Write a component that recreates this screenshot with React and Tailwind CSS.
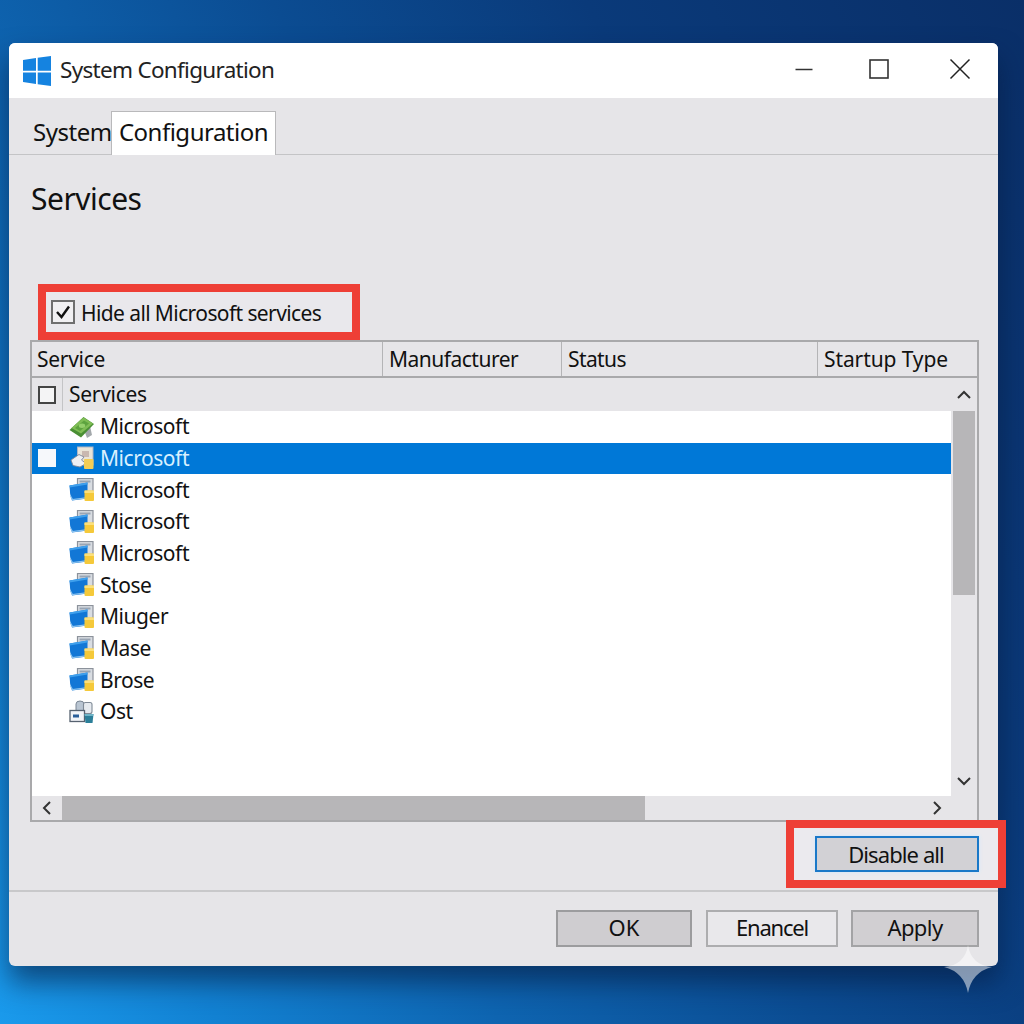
const F = { fontFamily: '"Noto Sans", "Open Sans", sans-serif' };

function WinLogo() {
  return (
    <svg width="28" height="30" viewBox="0 0 28 30" className="shrink-0">
      <path d="M0 4 L13 2 V14.7 H0 Z M14.7 1.8 L28 0 V14.7 H14.7 Z M0 16.4 H13 V28 L0 26 Z M14.7 16.4 H28 V30 L14.7 28.2 Z" fill="#1583e0" />
    </svg>
  );
}

function ServiceIcon() {
  return (
    <svg width="26" height="24" viewBox="0 0 26 24" className="shrink-0">
      <rect x="8.5" y="0.5" width="15.5" height="17" fill="#d9dde2" stroke="#8c929b" strokeWidth="1.2" />
      <rect x="10.5" y="2.5" width="11" height="2" fill="#9aa5b3" />
      <path d="M0.5 7.5 L18.5 4.5 V20.5 L3 22.5 Q0.5 16 0.5 7.5 Z" fill="#1277d6" />
      <path d="M0.5 7.5 L18.5 4.5 V6.5 L0.7 9.5 Z" fill="#3fa0ec" />
      <path d="M1.5 18 L3.5 21.5 L17 19.8" fill="none" stroke="#8cc4f0" strokeWidth="1.2" />
      <rect x="15.5" y="12.5" width="9.5" height="10.5" rx="1" fill="#f5c93a" />
      <rect x="15.5" y="12.5" width="9.5" height="2.5" fill="#fbe07c" />
    </svg>
  );
}

function SelectedIcon() {
  return (
    <svg width="26" height="24" viewBox="0 0 26 24" className="shrink-0">
      <rect x="8.5" y="1" width="15.5" height="18" fill="#e9e4d8" stroke="#aeb6c4" strokeWidth="1" />
      <rect x="13" y="5" width="7" height="6" fill="#c9b8b0" />
      <path d="M2 14 L10 8.5 L15 11 L12.5 14 L17 17.5 L11 21 L4 19.5 Z" fill="#eef0f3" stroke="#7d8696" strokeWidth="0.9" />
      <rect x="15" y="13" width="9.5" height="10" rx="1" fill="#f3cd55" />
    </svg>
  );
}

function MoneyIcon() {
  return (
    <svg width="26" height="24" viewBox="0 0 26 24" className="shrink-0">
      <path d="M15 15 L18 23 L23 20 L21 11 Z" fill="#a3a8ab" />
      <path d="M0.5 15 L14.5 2 L25 9 L12 22.5 Z" fill="#4a8f34" />
      <path d="M2.5 13 L14.5 2.5 L24 8.5 L12 18.5 Z" fill="#7fbd55" />
      <path d="M6 13 L15 5.5 L20 8.5 L11 16 Z" fill="#5da33f" />
      <ellipse cx="13" cy="10.8" rx="3.2" ry="2.2" fill="#94cf6c" />
    </svg>
  );
}

function OstIcon() {
  return (
    <svg width="26" height="24" viewBox="0 0 26 24" className="shrink-0">
      <path d="M7 11 V4 Q7 1 11 1 Q15 1 15 4 V11 Z" fill="#b9c5d2" stroke="#7a8694" strokeWidth="1" />
      <rect x="14.5" y="2.5" width="8.5" height="11" rx="2" fill="#e6eaef" stroke="#7f8a96" strokeWidth="1.1" />
      <rect x="1" y="10.5" width="14.5" height="11" fill="#f3f5f8" stroke="#566270" strokeWidth="1.3" />
      <rect x="4" y="14.5" width="6" height="3" fill="#2b5f99" />
      <path d="M15.5 14 H24.5 L23.5 23 H16.5 Z" fill="#2c7f99" />
      <path d="M15.5 14 H24.5 L24.2 16 H15.8 Z" fill="#6fb4c7" />
    </svg>
  );
}

function Row({ name, icon, selected }) {
  return (
    <div className={`flex h-[31.67px] items-center ${selected ? "bg-[#0078d7] text-[#d8f0ff]" : "text-[#111]"}`}>
      <div className="flex w-[37px] shrink-0 justify-start pl-[6px]">
        {selected && <div className="size-[18px] bg-[#f6f8fb]" />}
      </div>
      {icon}
      <span className="ml-[5px] text-[21px] leading-none tracking-[-0.45px]">{name}</span>
    </div>
  );
}

function Chevron({ d, className }) {
  return (
    <svg width="16" height="16" viewBox="0 0 16 16" className={className}>
      <path d={d} fill="none" stroke="#333" strokeWidth="2" />
    </svg>
  );
}

function HeaderCell({ label, className }) {
  return (
    <div className={`flex h-full items-center border-r border-[#b4b4b6] text-[21px] leading-none text-[#111] ${className}`}>
      {label}
    </div>
  );
}

function FootButton({ label, className }) {
  return (
    <button className={`flex h-[37px] items-center justify-center border-2 pb-[3px] text-[22px] leading-none text-[#111] ${className}`}>
      {label}
    </button>
  );
}

const rows = [
  ["Microsoft", <MoneyIcon />],
  ["Microsoft", <SelectedIcon />, true],
  ["Microsoft", <ServiceIcon />],
  ["Microsoft", <ServiceIcon />],
  ["Microsoft", <ServiceIcon />],
  ["Stose", <ServiceIcon />],
  ["Miuger", <ServiceIcon />],
  ["Mase", <ServiceIcon />],
  ["Brose", <ServiceIcon />],
  ["Ost", <OstIcon />],
];

export default function App() {
  return (
    <div
      style={F}
      className="relative h-[1024px] w-[1024px] overflow-hidden bg-[linear-gradient(62deg,#1a9aec_0%,#1281d2_14%,#0e64b0_32%,#0b4c92_52%,#0a3a7a_72%,#0a2f68_100%)] pl-[9px] pt-[43px]"
    >
      <div className="flex h-[923px] w-[989px] flex-col rounded-[6px] bg-[#e6e5e8] shadow-[0_16px_28px_rgba(5,25,60,0.6)]">
        {/* Title bar */}
        <div className="flex h-[55px] shrink-0 items-center rounded-t-[6px] bg-white pl-[14px] pr-[23.5px]">
          <WinLogo />
          <span className="ml-[9px] text-[22.5px] leading-none tracking-[-0.7px] text-[#222]">System Configuration</span>
          <div className="ml-auto flex items-center">
            <svg width="30" height="30" viewBox="0 0 30 30"><path d="M6.5 13.5 H23.5" stroke="#333" strokeWidth="1.5" /></svg>
            <svg width="30" height="30" viewBox="0 0 30 30" className="ml-[44.5px]"><rect x="6" y="4" width="18" height="18" fill="none" stroke="#333" strokeWidth="1.6" /></svg>
            <svg width="30" height="30" viewBox="0 0 30 30" className="ml-[51px]"><path d="M5.5 3.5 L24.5 22.5 M24.5 3.5 L5.5 22.5" stroke="#222" strokeWidth="1.5" /></svg>
          </div>
        </div>

        {/* Tabs */}
        <div className="flex h-[57px] shrink-0 items-end border-b border-[#c4c4c6] pl-[24px]">
          <div className="flex h-[44px] w-[78px] items-center text-[24px] leading-none tracking-[-0.45px] text-[#111]">System</div>
          <div className="-mb-px flex h-[44px] w-[165px] items-center justify-center border border-b-0 border-[#b9b9bb] bg-white pb-[3px] text-[24px] leading-none tracking-[-0.5px] text-[#111]">
            Configuration
          </div>
        </div>

        {/* Content */}
        <h1 className="ml-[22px] mt-[24px] h-[40px] text-[30px] font-normal leading-[40px] tracking-[-0.5px] text-[#111]">Services</h1>

        <div className="ml-[29px] mt-[65px] flex h-[56px] w-[322px] items-center border-[8px] border-[#ee3f36] bg-[#e9e8ec] pl-[5px]">
          <div className="flex size-[24px] items-center justify-center border-2 border-[#6f6f6f] bg-[#f1f0f2]">
            <svg width="18" height="18" viewBox="0 0 18 18"><path d="M3 9 L7.5 14 L15 3.5" fill="none" stroke="#111" strokeWidth="2.4" /></svg>
          </div>
          <span className="ml-[6px] mt-[2px] text-[21px] leading-none tracking-[-0.6px] text-[#111]">Hide all Microsoft services</span>
        </div>

        {/* Table */}
        <div className="ml-[21px] flex h-[482px] w-[949px] shrink-0 flex-col border-2 border-[#a9a9ab]">
          <div className="flex h-[36px] shrink-0 items-center border-b-2 border-[#a9a9ab]">
            <HeaderCell label="Service" className="w-[351px] pl-[5px] tracking-[-0.3px]" />
            <HeaderCell label="Manufacturer" className="w-[179px] pl-[6px] tracking-[-0.5px]" />
            <HeaderCell label="Status" className="w-[256px] pl-[6px] tracking-[-0.6px]" />
            <HeaderCell label="Startup Type" className="flex-1 border-r-0 pl-[6px] tracking-[-0.1px]" />
          </div>

          <div className="flex min-h-0 flex-1">
            <div className="flex min-w-0 flex-1 flex-col">
              <div className="flex h-[33px] shrink-0 items-center">
                <div className="ml-[6px] size-[18px] border-2 border-[#444] bg-[#f4f4f5]" />
                <div className="ml-[6px] h-full border-l border-[#c4c4c6] pl-[6px] pt-[5px] text-[21px] leading-[22px] tracking-[-0.3px] text-[#111]">Services</div>
              </div>
              <div className="flex-1 bg-white">
                {rows.map(([name, icon, selected], i) => (
                  <Row key={i} name={name} icon={icon} selected={selected} />
                ))}
              </div>
            </div>
            <div className="flex w-[26px] shrink-0 flex-col items-center">
              <div className="flex h-[33px] shrink-0 items-center justify-center">
                <Chevron d="M2 11 L8 5 L14 11" />
              </div>
              <div className="h-[184px] w-[22px] bg-[#b7b6b8]" />
              <div className="flex-1" />
              <div className="flex h-[30px] shrink-0 items-center justify-center">
                <Chevron d="M2 5 L8 11 L14 5" />
              </div>
            </div>
          </div>

          <div className="flex h-[24px] shrink-0 items-center">
            <div className="flex w-[30px] shrink-0 justify-center">
              <Chevron d="M11 2 L5 8 L11 14" />
            </div>
            <div className="h-full w-[583px] bg-[#b7b6b8]" />
            <div className="flex flex-1 justify-end pr-[32px]">
              <Chevron d="M5 2 L11 8 L5 14" />
            </div>
          </div>
        </div>

        {/* Disable all */}
        <div className="-mt-[2px] ml-[777px] flex h-[68px] w-[220px] shrink-0 items-center border-[8px] border-[#ee3f36] bg-[#ebeaee] pl-[21px]">
          <button className="h-[36px] w-[164px] border-2 border-[#1a78c8] bg-[#d2d1d5] pr-[2px] text-[22px] leading-none tracking-[-0.9px] text-[#111] shadow-[0_0_4px_#cfe6fa]">
            Disable all
          </button>
        </div>

        {/* Footer */}
        <div className="mt-[2px] flex flex-1 items-start border-t-2 border-[#c8c8ca] pl-[547px] pt-[18px]">
          <FootButton label="OK" className="w-[136px] border-[#9c9c9e] bg-[#cfcdd0]" />
          <FootButton label="Enancel" className="ml-[14px] w-[132px] border-[#adadaf] bg-[#e9e8eb] tracking-[-1.2px]" />
          <FootButton label="Apply" className="ml-[13px] w-[128px] border-[#a3a3a5] bg-[#d1cfd2] tracking-[-0.6px]" />
        </div>
      </div>

      {/* Sparkle watermark */}
      <svg width="48" height="48" viewBox="0 0 48 48" className="absolute left-[944px] top-[945px]">
        <path d="M24 0 Q27 20 48 22 Q28 27 24 48 Q20 27 0 22 Q21 20 24 0 Z" fill="#ffffff" fillOpacity="0.5" />
      </svg>
    </div>
  );
}
